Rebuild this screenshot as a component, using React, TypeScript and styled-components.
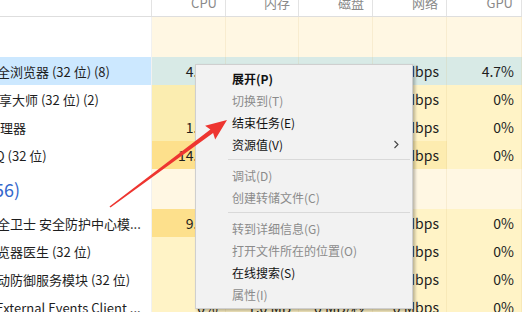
import React from 'react';
import styled, { createGlobalStyle } from 'styled-components';

const GlobalStyle = createGlobalStyle`
	html, body {
		margin: 0;
		padding: 0;
		background: #fff;
		overflow: hidden;
	}
	body {
		font-family: 'Segoe UI', 'Microsoft YaHei', 'Noto Sans CJK SC', sans-serif;
		font-size: 13px;
		color: #1e1e1e;
	}
`;

const COLS = '152px 74px 73px 74px 74px 75px';

const Screen = styled.div`
	position: relative;
	width: 522px;
	height: 312px;
	overflow: hidden;
	background: #fff;
`;

const Table = styled.div`
	display: flex;
	flex-direction: column;
`;

const HeaderRow = styled.div`
	display: grid;
	grid-template-columns: ${COLS};
	height: 17px;
	border-bottom: 1px solid #dedede;
	box-sizing: border-box;
`;

const HeaderCell = styled.div`
	display: flex;
	justify-content: flex-end;
	align-items: flex-start;
	padding-right: 8px;
	border-right: 1px solid #e3e3e3;
	overflow: hidden;
	color: #8a8a8a;
	font-size: 13px;
	line-height: 14px;
`;

const HeaderLabel = styled.span`
	margin-top: -4px;
`;

const Row = styled.div<{ $group?: boolean }>`
	display: grid;
	grid-template-columns: ${COLS};
	height: ${(p) => (p.$group ? 40 : 28)}px;
	flex-shrink: 0;
`;

const NameCell = styled.div<{ $selected?: boolean }>`
	display: flex;
	align-items: center;
	overflow: hidden;
	white-space: nowrap;
	background: ${(p) => (p.$selected ? '#cce8ff' : '#fff')};
	border-right: 1px solid #f1f1f1;
`;

const NameText = styled.span<{ $shift: number }>`
	margin-left: ${(p) => p.$shift}px;
	font-size: 13px;
	color: #1e1e1e;
`;

const GroupText = styled.span<{ $shift: number }>`
	margin-left: ${(p) => p.$shift}px;
	font-size: 18px;
	color: #3468cc;
`;

const DataCell = styled.div<{ $bg: string }>`
	display: flex;
	align-items: center;
	justify-content: flex-end;
	padding-right: 7px;
	background: ${(p) => p.$bg};
	border-right: 1px solid rgba(214, 190, 120, 0.18);
	white-space: nowrap;
	overflow: hidden;
	font-size: 14px;
	color: #1e1e1e;
`;

const Menu = styled.div`
	position: absolute;
	left: 195px;
	top: 64px;
	width: 218px;
	box-sizing: border-box;
	padding: 2px 2px 3px 2px;
	background: #f2f2f2;
	border: 1px solid #cfcfcf;
	box-shadow: 2px 2px 3px rgba(0, 0, 0, 0.28);
	display: flex;
	flex-direction: column;
	font-family: 'Microsoft YaHei', 'Noto Sans CJK SC', sans-serif;
`;

const MenuItem = styled.div<{ $disabled?: boolean; $bold?: boolean }>`
	display: flex;
	align-items: center;
	justify-content: space-between;
	height: 22px;
	padding-left: 34px;
	padding-right: 10px;
	font-size: 12px;
	font-weight: ${(p) => (p.$bold ? 700 : 400)};
	color: ${(p) => (p.$disabled ? '#8b8b8b' : '#111')};
`;

const Separator = styled.div`
	height: 9px;
	display: flex;
	align-items: center;
	padding-left: 30px;

	&::after {
		content: '';
		flex: 1;
		height: 1px;
		background: #d9d9d9;
	}
`;

const Chevron = styled.svg`
	width: 7px;
	height: 9px;
`;

const Overlay = styled.svg`
	position: absolute;
	left: 0;
	top: 0;
	pointer-events: none;
`;

const SEL = '#d8eae6';
const GROUP = '#fff7e3';
const LIGHT = '#fff3c6';
const CPU_LOW = '#fbedb0';
const CPU_HIGH = '#fde08c';

type Item = {
	kind: 'row' | 'group';
	name: string;
	shift: number;
	selected?: boolean;
	values?: string[];
	bgs?: string[];
};

const rows: Item[] = [
	{ kind: 'group', name: '', shift: 0 },
	{
		kind: 'row',
		name: '全浏览器 (32 位) (8)',
		shift: -3,
		selected: true,
		values: ['4.2%', '180.5 MB', '0.1 MB/秒', '0.1 Mbps', '4.7%'],
		bgs: [SEL, SEL, SEL, SEL, SEL],
	},
	{
		kind: 'row',
		name: '享大师 (32 位) (2)',
		shift: -1,
		values: ['0%', '20.1 MB', '0 MB/秒', '0 Mbps', '0%'],
		bgs: [CPU_LOW, LIGHT, LIGHT, LIGHT, LIGHT],
	},
	{
		kind: 'row',
		name: '理器',
		shift: 0,
		values: ['1.5%', '25.3 MB', '0.1 MB/秒', '0 Mbps', '0%'],
		bgs: [CPU_LOW, LIGHT, LIGHT, LIGHT, LIGHT],
	},
	{
		kind: 'row',
		name: 'Q (32 位)',
		shift: -5,
		values: ['14.3%', '120.2 MB', '0.1 MB/秒', '0.1 Mbps', '0%'],
		bgs: [CPU_HIGH, LIGHT, LIGHT, '#fdecb0', LIGHT],
	},
	{ kind: 'group', name: '(56)', shift: -12 },
	{
		kind: 'row',
		name: '全卫士 安全防护中心模...',
		shift: -3,
		values: ['9.1%', '30.6 MB', '0 MB/秒', '0 Mbps', '0%'],
		bgs: [CPU_HIGH, LIGHT, LIGHT, LIGHT, LIGHT],
	},
	{
		kind: 'row',
		name: '览器医生 (32 位)',
		shift: -3,
		values: ['0%', '5.2 MB', '0 MB/秒', '0 Mbps', '0%'],
		bgs: [LIGHT, LIGHT, LIGHT, LIGHT, LIGHT],
	},
	{
		kind: 'row',
		name: '动防御服务模块 (32 位)',
		shift: -3,
		values: ['0%', '3.4 MB', '0 MB/秒', '0 Mbps', '0%'],
		bgs: [LIGHT, LIGHT, LIGHT, LIGHT, LIGHT],
	},
	{
		kind: 'row',
		name: 'External Events Client ...',
		shift: -4,
		values: ['0%', '1.0 MB', '0 MB/秒', '0 Mbps', '0%'],
		bgs: [LIGHT, LIGHT, LIGHT, LIGHT, LIGHT],
	},
];

const headers = ['', 'CPU', '内存', '磁盘', '网络', 'GPU'];

type MenuEntry = { label?: string; disabled?: boolean; bold?: boolean; sub?: boolean; sep?: boolean };

const menu: MenuEntry[] = [
	{ label: '展开(P)', bold: true },
	{ label: '切换到(T)', disabled: true },
	{ label: '结束任务(E)' },
	{ label: '资源值(V)', sub: true },
	{ sep: true },
	{ label: '调试(D)', disabled: true },
	{ label: '创建转储文件(C)', disabled: true },
	{ sep: true },
	{ label: '转到详细信息(G)', disabled: true },
	{ label: '打开文件所在的位置(O)', disabled: true },
	{ label: '在线搜索(S)' },
	{ label: '属性(I)', disabled: true },
];

// red annotation arrow, tail -> tip
const tail = { x: 110, y: 207 };
const tip = { x: 227, y: 120 };

const arrowPoints = () => {
	const dx = tip.x - tail.x;
	const dy = tip.y - tail.y;
	const len = Math.hypot(dx, dy);
	const ux = dx / len;
	const uy = dy / len;
	const nx = -uy;
	const ny = ux;
	const headLen = 21;
	const headHalf = 8.5;
	const bx = tip.x - ux * headLen;
	const by = tip.y - uy * headLen;
	const p = (x: number, y: number) => `${x.toFixed(1)},${y.toFixed(1)}`;
	return [
		p(tail.x + nx * 0.8, tail.y + ny * 0.8),
		p(bx + nx * 2.2 + ux * 2, by + ny * 2.2 + uy * 2),
		p(bx + nx * headHalf, by + ny * headHalf),
		p(tip.x, tip.y),
		p(bx - nx * headHalf, by - ny * headHalf),
		p(bx - nx * 2.2 + ux * 2, by - ny * 2.2 + uy * 2),
		p(tail.x - nx * 0.8, tail.y - ny * 0.8),
	].join(' ');
};

const App: React.FC = () => {
	return (
		<Screen>
			<GlobalStyle />
			<Table>
				<HeaderRow>
					{headers.map((h, i) => (
						<HeaderCell key={i}>
							<HeaderLabel>{h}</HeaderLabel>
						</HeaderCell>
					))}
				</HeaderRow>
				{rows.map((r, i) =>
					r.kind === 'group' ? (
						<Row $group key={i}>
							<NameCell>
								<GroupText $shift={r.shift}>{r.name}</GroupText>
							</NameCell>
							{[0, 1, 2, 3, 4].map((c) => (
								<DataCell key={c} $bg={GROUP} />
							))}
						</Row>
					) : (
						<Row key={i}>
							<NameCell $selected={r.selected}>
								<NameText $shift={r.shift}>{r.name}</NameText>
							</NameCell>
							{r.values!.map((v, c) => (
								<DataCell key={c} $bg={r.bgs![c]}>
									{v}
								</DataCell>
							))}
						</Row>
					)
				)}
			</Table>

			<Menu>
				{menu.map((m, i) =>
					m.sep ? (
						<Separator key={i} />
					) : (
						<MenuItem key={i} $disabled={m.disabled} $bold={m.bold}>
							<span>{m.label}</span>
							{m.sub && (
								<Chevron viewBox="0 0 7 9">
									<path d="M1.5 1 L5 4.5 L1.5 8" fill="none" stroke="#444" strokeWidth="1.1" />
								</Chevron>
							)}
						</MenuItem>
					)
				)}
			</Menu>

			<Overlay width="522" height="312" viewBox="0 0 522 312">
				<polygon points={arrowPoints()} fill="#ee3530" />
			</Overlay>
		</Screen>
	);
};

export default App;
